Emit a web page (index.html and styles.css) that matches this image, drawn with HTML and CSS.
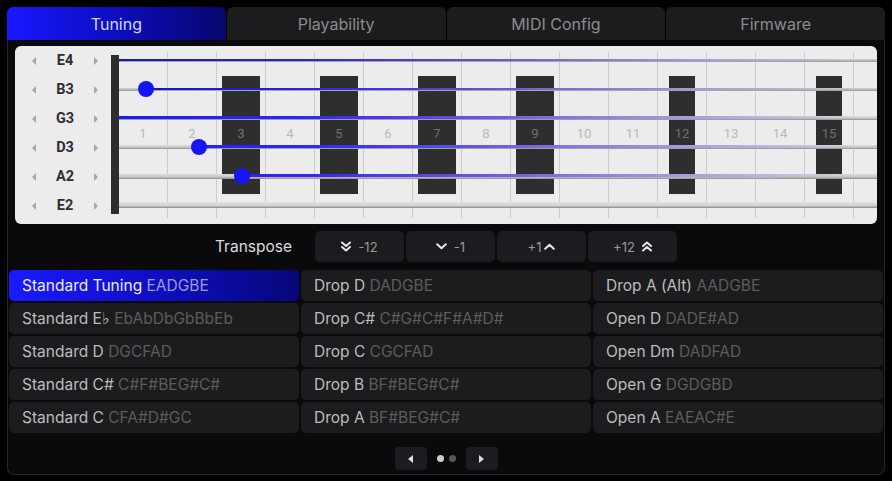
FILE: index.html
```html
<!DOCTYPE html>
<html lang="en">
<head>
<meta charset="utf-8">
<title>Tuning</title>
<link rel="stylesheet" href="styles.css">
</head>
<body>
<div class="app">
  <nav class="tabs">
    <div class="tab active">Tuning</div>
    <div class="tab">Playability</div>
    <div class="tab">MIDI Config</div>
    <div class="tab">Firmware</div>
  </nav>
  <section class="panel">
    <div class="fretboard">
      <div class="labels">
        <div class="label-row"><span class="tri tri-left"></span><span class="note">E4</span><span class="tri tri-right"></span></div>
        <div class="label-row"><span class="tri tri-left"></span><span class="note">B3</span><span class="tri tri-right"></span></div>
        <div class="label-row"><span class="tri tri-left"></span><span class="note">G3</span><span class="tri tri-right"></span></div>
        <div class="label-row"><span class="tri tri-left"></span><span class="note">D3</span><span class="tri tri-right"></span></div>
        <div class="label-row"><span class="tri tri-left"></span><span class="note">A2</span><span class="tri tri-right"></span></div>
        <div class="label-row"><span class="tri tri-left"></span><span class="note">E2</span><span class="tri tri-right"></span></div>
      </div>
      <div class="nut"></div>
      <div class="neck">
        <div class="frets">
          <div class="fret"><span class="num">1</span></div>
          <div class="fret"><span class="num">2</span></div>
          <div class="fret"><div class="inlay"><span class="num">3</span></div></div>
          <div class="fret"><span class="num">4</span></div>
          <div class="fret"><div class="inlay"><span class="num">5</span></div></div>
          <div class="fret"><span class="num">6</span></div>
          <div class="fret"><div class="inlay"><span class="num">7</span></div></div>
          <div class="fret"><span class="num">8</span></div>
          <div class="fret"><div class="inlay"><span class="num">9</span></div></div>
          <div class="fret"><span class="num">10</span></div>
          <div class="fret"><span class="num">11</span></div>
          <div class="fret"><div class="inlay narrow"><span class="num">12</span></div></div>
          <div class="fret"><span class="num">13</span></div>
          <div class="fret"><span class="num">14</span></div>
          <div class="fret"><div class="inlay narrow"><span class="num">15</span></div></div>
        </div>
        <div class="strings">
          <div class="string thin"><div class="wire"></div><div class="played" style="--x:0px"></div></div>
          <div class="string thin"><div class="wire"></div><div class="played" style="--x:27px"></div><div class="dot" style="--x:27px"></div></div>
          <div class="string mid"><div class="wire"></div><div class="played" style="--x:0px"></div></div>
          <div class="string mid"><div class="wire"></div><div class="played" style="--x:80px"></div><div class="dot" style="--x:80px"></div></div>
          <div class="string thick"><div class="wire"></div><div class="played" style="--x:123px"></div><div class="dot" style="--x:123px"></div></div>
          <div class="string heavy"><div class="wire"></div></div>
        </div>
      </div>
    </div>

    <div class="transpose">
      <span class="transpose-label">Transpose</span>
      <div class="transpose-buttons">
        <button class="tbtn">
          <svg class="ico" width="10" height="11" viewBox="0 0 10 11"><path d="M1 1.5 L5 5 L9 1.5 M1 6 L5 9.5 L9 6" fill="none" stroke="currentColor" stroke-width="2" stroke-linecap="round" stroke-linejoin="round"/></svg>
          <span>-12</span>
        </button>
        <button class="tbtn">
          <svg class="ico" width="11" height="7" viewBox="0 0 11 7"><path d="M1.2 1.2 L5.5 5.3 L9.8 1.2" fill="none" stroke="currentColor" stroke-width="2" stroke-linecap="round" stroke-linejoin="round"/></svg>
          <span>-1</span>
        </button>
        <button class="tbtn tight">
          <span>+1</span>
          <svg class="ico" width="11" height="7" viewBox="0 0 11 7"><path d="M1.2 5.8 L5.5 1.7 L9.8 5.8" fill="none" stroke="currentColor" stroke-width="2" stroke-linecap="round" stroke-linejoin="round"/></svg>
        </button>
        <button class="tbtn">
          <span>+12</span>
          <svg class="ico" width="10" height="11" viewBox="0 0 10 11"><path d="M1 5 L5 1.5 L9 5 M1 9.5 L5 6 L9 9.5" fill="none" stroke="currentColor" stroke-width="2" stroke-linecap="round" stroke-linejoin="round"/></svg>
        </button>
      </div>
    </div>

    <div class="presets">
      <div class="preset active"><span class="pname">Standard Tuning</span> <span class="pnotes">EADGBE</span></div>
      <div class="preset"><span class="pname">Drop D</span> <span class="pnotes">DADGBE</span></div>
      <div class="preset"><span class="pname">Drop A (Alt)</span> <span class="pnotes">AADGBE</span></div>
      <div class="preset"><span class="pname">Standard E♭</span> <span class="pnotes">EbAbDbGbBbEb</span></div>
      <div class="preset"><span class="pname">Drop C#</span> <span class="pnotes">C#G#C#F#A#D#</span></div>
      <div class="preset"><span class="pname">Open D</span> <span class="pnotes">DADE#AD</span></div>
      <div class="preset"><span class="pname">Standard D</span> <span class="pnotes">DGCFAD</span></div>
      <div class="preset"><span class="pname">Drop C</span> <span class="pnotes">CGCFAD</span></div>
      <div class="preset"><span class="pname">Open Dm</span> <span class="pnotes">DADFAD</span></div>
      <div class="preset"><span class="pname">Standard C#</span> <span class="pnotes">C#F#BEG#C#</span></div>
      <div class="preset"><span class="pname">Drop B</span> <span class="pnotes">BF#BEG#C#</span></div>
      <div class="preset"><span class="pname">Open G</span> <span class="pnotes">DGDGBD</span></div>
      <div class="preset"><span class="pname">Standard C</span> <span class="pnotes">CFA#D#GC</span></div>
      <div class="preset"><span class="pname">Drop A</span> <span class="pnotes">BF#BEG#C#</span></div>
      <div class="preset"><span class="pname">Open A</span> <span class="pnotes">EAEAC#E</span></div>
    </div>

    <div class="pager">
      <button class="pbtn"><span class="ptri ptri-left"></span></button>
      <span class="pdot on"></span>
      <span class="pdot"></span>
      <button class="pbtn"><span class="ptri ptri-right"></span></button>
    </div>
  </section>
</div>
</body>
</html>
```

FILE: styles.css
```css
* { box-sizing: border-box; }

html, body {
  margin: 0;
  background: #000;
  font-family: "Inter", "Noto Sans", sans-serif;
}

.app {
  width: 892px;
  height: 481px;
  padding: 7px 7px 0 7px;
}

/* Tabs */
.tabs {
  display: grid;
  grid-template-columns: repeat(4, 1fr);
  gap: 1px;
  height: 33px;
}
.tab {
  display: flex;
  align-items: center;
  justify-content: center;
  background: #1c1c1f;
  border-radius: 6px 6px 0 0;
  color: #8c8c8c;
  font-size: 16px;
}
.tab.active {
  background: linear-gradient(90deg, #1818ff 0%, #0d0dc0 50%, #06066c 100%);
  color: #d6d6f6;
}

/* Panel frame */
.panel {
  height: 435px;
  border: 1px solid #28282b;
  border-top: none;
  border-radius: 0 0 7px 7px;
  background: #0a0a0c;
  padding: 6px 0 4px;
  display: flex;
  flex-direction: column;
}

/* Fretboard */
.fretboard {
  margin: 0 7px;
  height: 178px;
  background: #ececec;
  border-radius: 6px;
  overflow: hidden;
  display: flex;
}
.labels {
  width: 96px;
  display: flex;
  flex-direction: column;
}
.label-row {
  height: 29px;
  display: grid;
  grid-template-columns: 4px 58px 4px;
  align-items: center;
  padding-left: 17px;
}
.note {
  text-align: center;
  font-family: "Roboto", "Inter", sans-serif;
  font-weight: 700;
  font-size: 14.5px;
  color: #2e2e2e;
}
.tri {
  width: 0;
  height: 0;
  border-top: 4px solid transparent;
  border-bottom: 4px solid transparent;
}
.tri-left { border-right: 4px solid #a6a6a6; }
.tri-right { border-left: 4px solid #a6a6a6; }

.nut {
  width: 8px;
  margin: 9px 0 10px;
  background: #2d2d2d;
}
.neck {
  flex: 1;
  position: relative;
}
.frets {
  display: flex;
  height: 100%;
  padding: 6px 0;
}
.fret {
  width: 49px;
  flex: none;
  border-right: 1px solid #cdcdcd;
  display: flex;
  align-items: center;
  justify-content: center;
}
.num {
  font-family: "Roboto", sans-serif;
  font-size: 13px;
  color: #b8b8b8;
  margin-top: -4px;
}
.inlay {
  width: 38px;
  height: 118px;
  background: #2e2e2e;
  display: flex;
  align-items: center;
  justify-content: center;
}
.inlay.narrow { width: 26px; }
.inlay .num { color: #707070; }

/* Strings overlay */
.strings {
  position: absolute;
  inset: 0;
  display: flex;
  flex-direction: column;
}
.string {
  height: 29px;
  position: relative;
}
.wire {
  position: absolute;
  left: 0;
  right: 0;
  top: 12px;
  height: 4px;
  background: linear-gradient(180deg, #dcdcdc 0%, #c9c9c9 55%, #8e8e8e 100%);
}
.played {
  position: absolute;
  left: var(--x);
  right: 0;
  top: 12px;
  height: 3px;
  background: linear-gradient(90deg, #1a1aff 0%, #3326f6 25%, #5f4fea 45%, #9283e0 65%, #b3a8de 80%, rgba(215,212,228,0) 97%);
  background-size: 758px 100%;
  background-position: right center;
}
.string.thin .wire { height: 3px; top: 13px; background: linear-gradient(180deg, #d4d4d4 0%, #9c9c9c 100%); }
.string.thin .played { height: 2px; top: 13px; background: linear-gradient(90deg, #1414d0 0%, #2a22e0 25%, #5848dc 45%, #8a7ed8 65%, #aaa2d8 80%, rgba(200,200,215,0) 97%); background-size: 758px 100%; background-position: right center; }
.string.mid .wire { height: 4px; }
.string.thick .wire { height: 5px; }
.string.heavy .wire { height: 6px; top: 11px; background: linear-gradient(180deg, #e2e2e2 0%, #d0d0d0 60%, #8a8a8a 100%); }

.dot {
  position: absolute;
  left: calc(var(--x) - 8px);
  top: 6px;
  width: 16px;
  height: 16px;
  border-radius: 50%;
  background: #1515f8;
}

/* Transpose */
.transpose {
  margin-top: 7px;
  height: 31px;
  display: flex;
  justify-content: center;
  align-items: center;
  gap: 23px;
}
.transpose-label {
  color: #dcdcdc;
  font-size: 15.5px;
}
.transpose-buttons {
  display: flex;
  gap: 2px;
}
.tbtn {
  width: 89px;
  height: 31px;
  border: none;
  border-radius: 5px;
  background: #1c1c20;
  color: #9a9a9a;
  font-family: "Inter", sans-serif;
  font-size: 13px;
  display: flex;
  align-items: center;
  justify-content: center;
  gap: 7px;
  padding: 0;
}
.tbtn.tight { gap: 3px; }
.ico { color: #e6e6e6; display: block; }

/* Presets grid */
.presets {
  margin: 8px 1px 0;
  display: grid;
  grid-template-columns: repeat(3, 1fr);
  grid-auto-rows: 31px;
  gap: 2px;
}
.preset {
  background: #1c1c1f;
  border-radius: 5px;
  padding-left: 13px;
  font-size: 15.5px;
  line-height: 31px;
  white-space: nowrap;
}
.pname { color: #bdbdbd; }
.pnotes { color: #5c5c5c; }
.preset.active {
  background: linear-gradient(90deg, #1a1aff 0%, #0e0ec4 50%, #07077a 100%);
}
.preset.active .pname { color: #ececff; }
.preset.active .pnotes { color: #9c9cd6; }

/* Pager */
.pager {
  margin-top: 14px;
  display: flex;
  justify-content: center;
  align-items: center;
}
.pbtn {
  width: 32px;
  height: 23px;
  border: none;
  border-radius: 4px;
  background: #1c1c20;
  display: flex;
  align-items: center;
  justify-content: center;
  padding: 0;
}
.ptri {
  width: 0;
  height: 0;
  border-top: 4.5px solid transparent;
  border-bottom: 4.5px solid transparent;
}
.ptri-left { border-right: 5px solid #dedede; }
.ptri-right { border-left: 5px solid #dedede; }
.pdot {
  width: 7px;
  height: 7px;
  border-radius: 50%;
  background: #575757;
  margin-right: 5px;
}
.pdot.on {
  background: #cfcfcf;
  margin-left: 10px;
}
.pdot + .pbtn { margin-left: 5px; }
```
